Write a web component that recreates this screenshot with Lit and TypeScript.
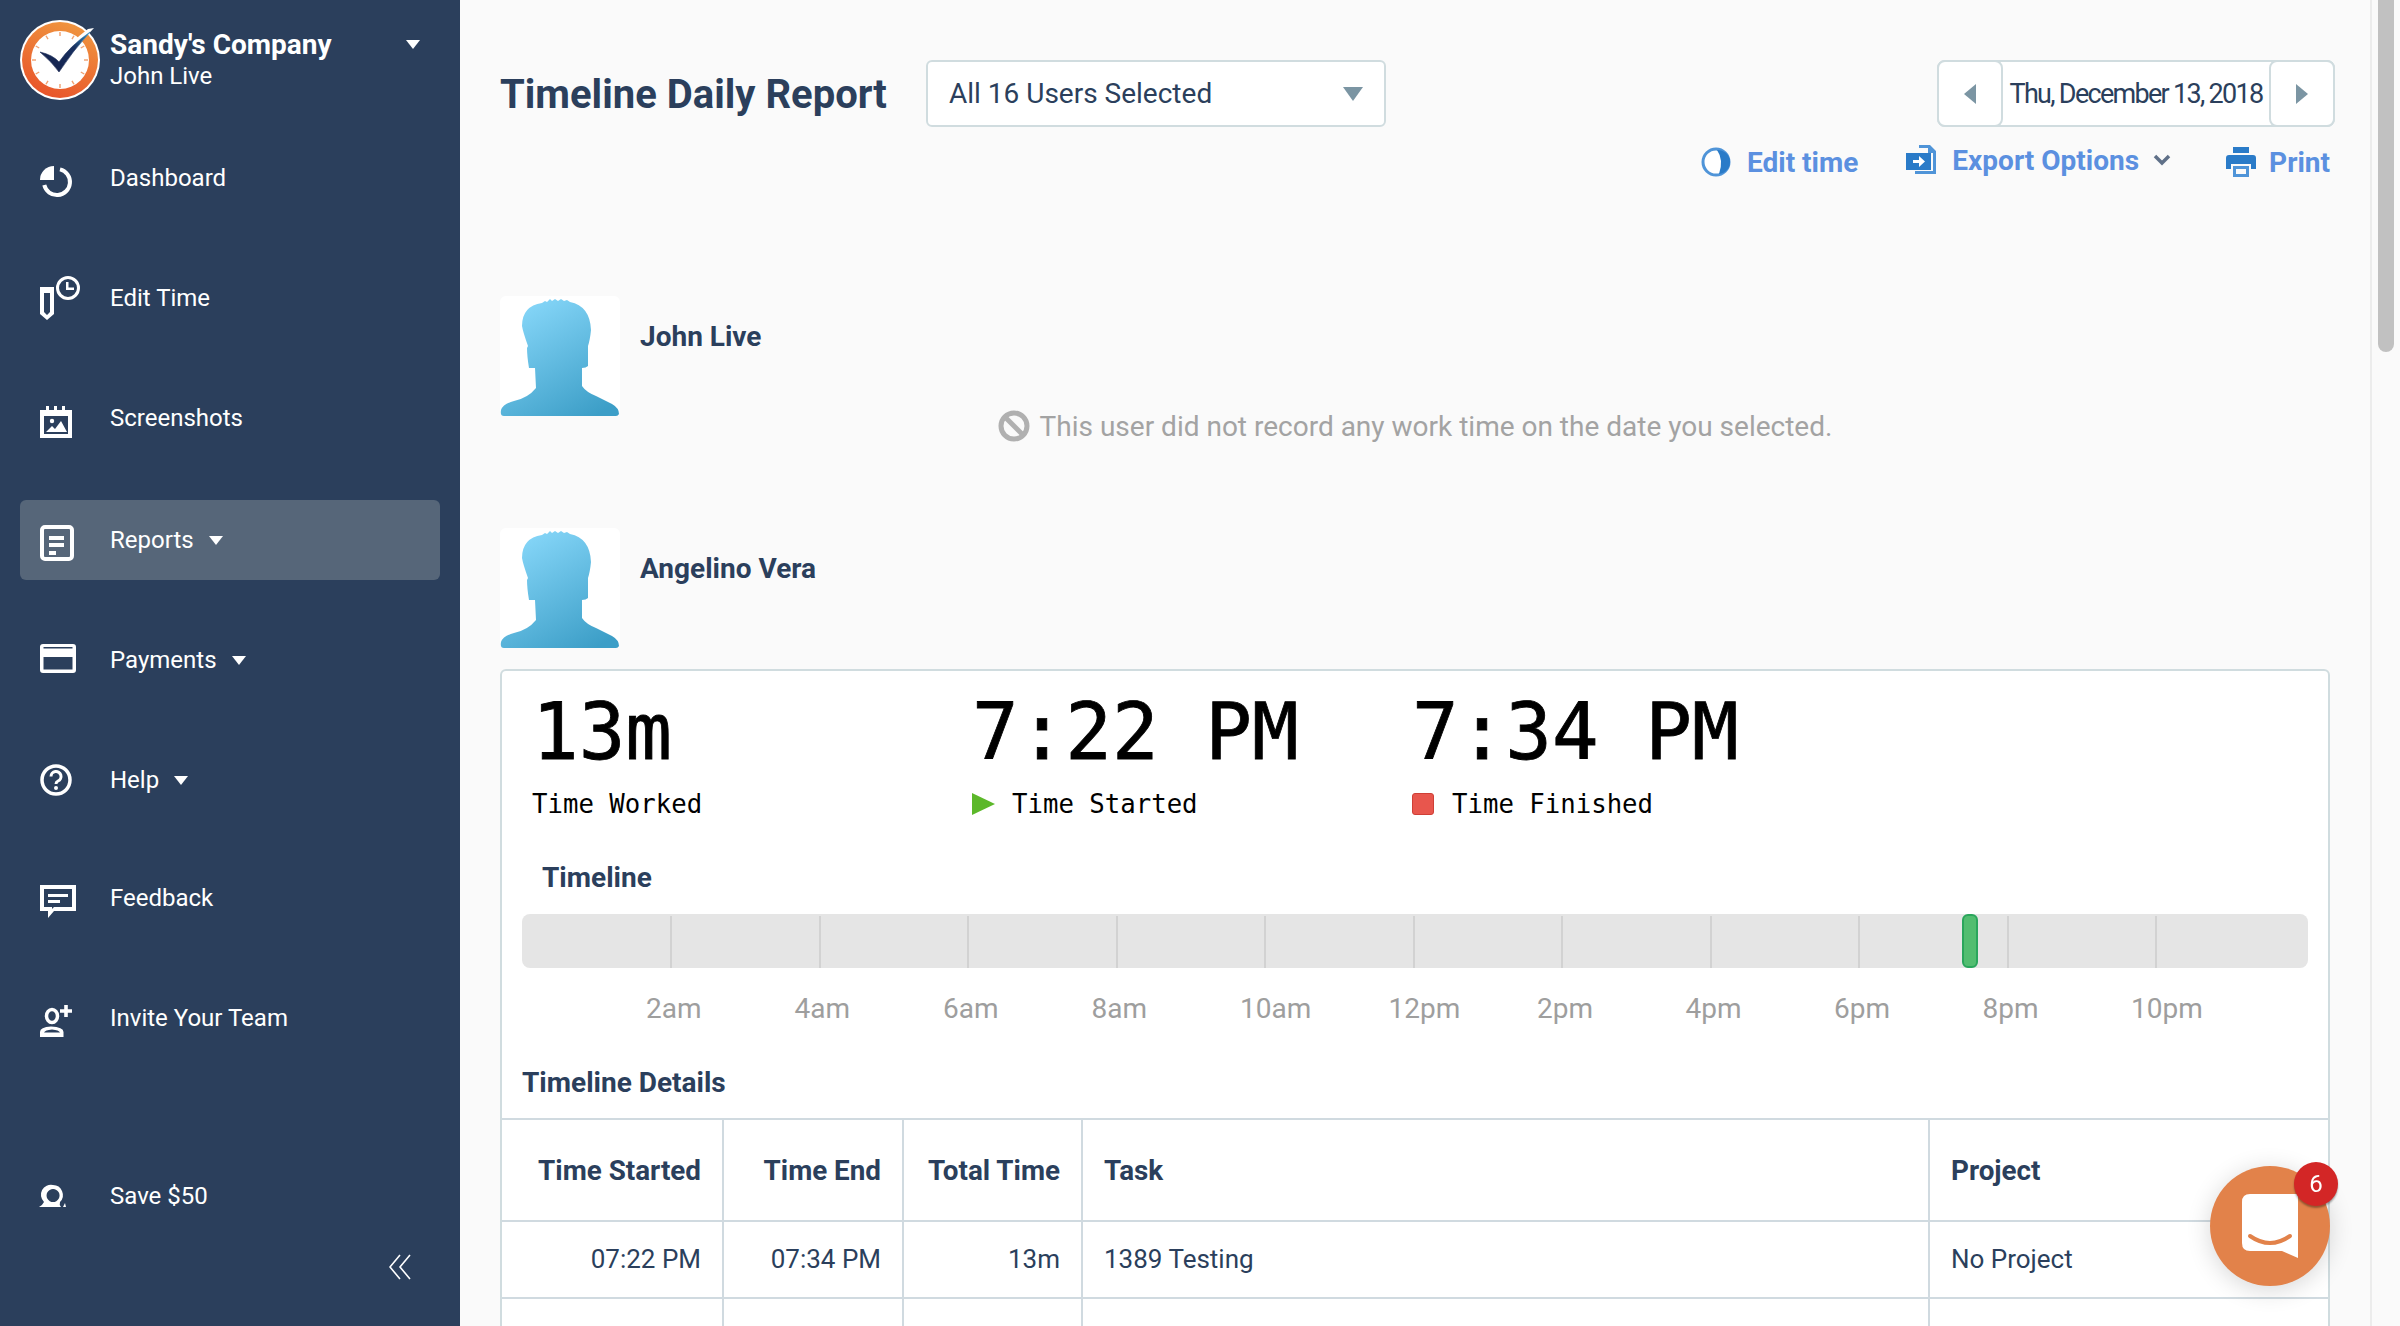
import { LitElement, html, svg, css } from 'lit';
import { customElement } from 'lit/decorators.js';

// sidebar icons, drawn in a 40x40 box centred on the row
const icons: Record<string, unknown> = {
  dashboard: svg`<path d="M14 8 A14 14 0 0 0 0 22 H14 Z" fill="#fff"/><path d="M20 11.400 A13 13 0 1 1 4.300 27" fill="none" stroke="#fff" stroke-width="4"/>`,
  edit: svg`<path d="M0 9 H14 V36 L7 42 L0 36 Z M4 15 V34 L7 37 L10 34 V15 Z" fill="#fff" fill-rule="evenodd"/><circle cx="28" cy="10" r="10.500" fill="none" stroke="#fff" stroke-width="3"/><path d="M26 4 V12 H34 V9.500 H28.500 V4 Z" fill="#fff"/>`,
  shots: svg`<g transform="translate(0 6)"><path d="M0 6 H6 V2 H9 V6 H14 V2 H17 V6 H22 V2 H25 V6 H32 V34 H0 Z M4 12 V30 H28 V12 Z" fill="#fff" fill-rule="evenodd"/><circle cx="12" cy="17" r="2.200" fill="#fff"/><path d="M6 28 L12 22 L15 25 L21 17 L27 28 Z" fill="#fff"/></g>`,
  reports: svg`<rect x="2" y="7" width="30" height="32" rx="3" fill="none" stroke="#fff" stroke-width="4"/><path d="M9 16 H24 V20 H9 Z M9 23 H24 V27 H9 Z M9 31 H16 V35 H9 Z" fill="#fff"/>`,
  payments: svg`<path d="M3 4 H33 Q36 4 36 7 V30 Q36 33 33 33 H3 Q0 33 0 30 V7 Q0 4 3 4 Z M3.500 7 V8.500 H32.500 V7 Z M3.500 17 V29.500 H32.500 V17 Z" fill="#fff" fill-rule="evenodd"/>`,
  help: svg`<g transform="translate(0 4)"><circle cx="16" cy="16" r="14" fill="none" stroke="#fff" stroke-width="3.500"/><path d="M11 12.500 A5 5 0 1 1 18 17 Q16 18 16 20" fill="none" stroke="#fff" stroke-width="3"/><circle cx="16" cy="24" r="2" fill="#fff"/></g>`,
  feedback: svg`<g transform="translate(0 6)"><path d="M0 1 H36 V27 H14 L8 34 V27 H0 Z M4 5 V23 H12 V25 L14 23 H32 V5 Z" fill="#fff" fill-rule="evenodd"/><path d="M8 10 H28 V13 H8 Z M8 16 H20 V19 H8 Z" fill="#fff"/></g>`,
  invite: svg`<ellipse cx="12" cy="18" rx="5.500" ry="6.500" fill="none" stroke="#fff" stroke-width="3.500"/><path d="M0 39 V34 Q0 29 11 28.500 Q23.500 29 23.500 34 V39 Z M4 34.500 H20 Q19 32 12 31.500 Q5 32 4 34.500 Z" fill="#fff" fill-rule="evenodd"/><path d="M24.200 7 H27.800 V11.200 H32 V14.800 H27.800 V19 H24.200 V14.800 H20 V11.200 H24.200 Z" fill="#fff"/>`,
  save: svg`<g transform="translate(-1 9)"><path d="M14 0 A10 10 0 0 1 21 17 Q20 20 22 22 H0 Q3 21 5 17 A10 10 0 0 1 14 0 Z M14 4 A6.500 6.500 0 1 0 14.100 4 Z" fill="#fff" fill-rule="evenodd"/><path d="M24 22 L26 18 L27 22 Z" fill="#fff"/></g>`,
};

const navItems = [
  { id: 'dashboard', label: 'Dashboard' },
  { id: 'edit', label: 'Edit Time' },
  { id: 'shots', label: 'Screenshots' },
  { id: 'reports', label: 'Reports', caret: true, active: true },
  { id: 'payments', label: 'Payments', caret: true },
  { id: 'help', label: 'Help', caret: true },
  { id: 'feedback', label: 'Feedback' },
  { id: 'invite', label: 'Invite Your Team' },
];

const hours = ['2am', '4am', '6am', '8am', '10am', '12pm', '2pm', '4pm', '6pm', '8pm', '10pm'];

const avatar = html`<div class="avatar">
  <svg width="120" height="120" viewBox="0 0 120 120">
    <defs>
      <linearGradient id="sil" x1="0.2" y1="0" x2="0.8" y2="1">
        <stop offset="0" stop-color="#88d8fa" />
        <stop offset="1" stop-color="#3c9ec7" />
      </linearGradient>
    </defs>
    <path
      fill="url(#sil)"
      d="M4 120 Q0 120 1 114 Q3 108 14 105 Q28 102 36 92 L35 72 L29 72 Q27 60 27 52 L28 50 Q23 36 22 30 Q22 10 42 7 L45 5 L47 6 L50 3 L52 5 L55 3 L58 5 L61 3 L64 5 L67 4 L70 6 Q90 10 91 34 Q90 44 88 50 L88 70 Q86 72 82 72 L82 90 Q86 96 96 100 L112 108 Q119 112 119 118 Q118 120 116 120 Z"
    />
  </svg>
</div>`;

@customElement('app-root')
export class AppRoot extends LitElement {
  static styles = css`
    :host {
      display: flex;
      height: 100vh;
      overflow: hidden;
      font-family: Roboto, 'Liberation Sans', sans-serif;
      color: #2b3f5c;
      background: #fafafa;
    }
    .side {
      width: 460px;
      flex: none;
      background: #2b3f5c;
      color: #fff;
      display: flex;
      flex-direction: column;
      box-sizing: border-box;
      padding: 20px 20px 0;
    }
    .brand {
      display: flex;
      align-items: flex-start;
      height: 80px;
      margin-bottom: 38px;
    }
    .brand .logo {
      flex: none;
    }
    .brand .names {
      margin-left: 10px;
      flex: 1;
      padding-top: 8px;
    }
    .brand .co {
      font-size: 28px;
      font-weight: 700;
      line-height: 34px;
    }
    .brand .me {
      font-size: 24px;
      line-height: 28px;
    }
    .brand .caret {
      margin: 20px 20px 0 0;
    }
    .caret {
      width: 0;
      height: 0;
      border-left: 7px solid transparent;
      border-right: 7px solid transparent;
      border-top: 9px solid #fff;
    }
    .nav {
      display: flex;
      flex-direction: column;
      gap: 40px;
    }
    .item {
      height: 80px;
      display: flex;
      align-items: center;
      padding-left: 20px;
      border-radius: 6px;
      font-size: 24px;
    }
    .item svg {
      width: 40px;
      height: 40px;
      flex: none;
      margin-right: 30px;
      overflow: visible;
    }
    .item .caret {
      margin-left: 15px;
    }
    .item.active {
      background: #566679;
    }
    .item.reports {
      margin-top: 2px;
    }
    .item.feedback {
      margin-top: -2px;
    }
    .item.save {
      margin-top: 58px;
    }
    .collapse {
      align-self: flex-end;
      margin: 18px 29px 0 0;
      display: block;
    }

    .main {
      flex: 1;
      min-width: 0;
      box-sizing: border-box;
      padding: 60px 40px 0;
    }
    .top {
      display: flex;
      align-items: center;
      height: 67px;
    }
    .top h1 {
      font-size: 40px;
      font-weight: 700;
      margin: 0;
      padding-top: 3px;
      width: 426px;
      flex: none;
      line-height: 64px;
    }
    .select {
      width: 460px;
      height: 67px;
      box-sizing: border-box;
      background: #fff;
      border: 2px solid #d0dcdf;
      border-radius: 6px;
      display: flex;
      align-items: center;
      justify-content: space-between;
      padding: 0 21px;
      font-size: 28px;
    }
    .tri-down {
      border-left: 10px solid transparent;
      border-right: 10px solid transparent;
      border-top: 14px solid #7b95a3;
    }
    .date {
      margin-left: auto;
      margin-right: -5px;
      width: 398px;
      height: 67px;
      box-sizing: border-box;
      background: #fff;
      border: 2px solid #d0dcdf;
      border-radius: 8px;
      display: flex;
      align-items: center;
      font-size: 27px;
      letter-spacing: -1.700px;
    }
    .date .text {
      flex: 1;
      text-align: center;
      white-space: nowrap;
    }
    .date button {
      width: 66px;
      height: 67px;
      margin: -2px;
      flex: none;
      background: #fff;
      border: 2px solid #d0dcdf;
      border-radius: 8px;
      padding: 0;
      display: flex;
      align-items: center;
      justify-content: center;
    }
    .tri-left {
      border-top: 10px solid transparent;
      border-bottom: 10px solid transparent;
      border-right: 12px solid #7b95a3;
    }
    .tri-right {
      border-top: 10px solid transparent;
      border-bottom: 10px solid transparent;
      border-left: 12px solid #7b95a3;
    }
    .actions {
      display: flex;
      justify-content: flex-end;
      align-items: center;
      height: 40px;
      margin-top: 15px;
      font-size: 28px;
      font-weight: 700;
      color: #5b90e0;
    }
    .act {
      display: flex;
      align-items: center;
      margin-left: 48px;
    }
    .act svg {
      margin-right: 16px;
      flex: none;
    }
    .act.print {
      margin-left: 55px;
    }
    .act.print svg {
      margin-right: 13px;
    }
    .act.export {
      padding-bottom: 4px;
    }
    .act .chev {
      margin: 0 0 0 14px;
    }

    .user {
      display: flex;
    }
    .user.first {
      margin-top: 114px;
    }
    .user.second {
      margin-top: 82px;
    }
    .avatar {
      width: 120px;
      height: 120px;
      background: #fff;
      border-radius: 6px;
      flex: none;
    }
    .avatar svg {
      display: block;
    }
    .user .name {
      margin: 21px 0 0 20px;
      font-size: 28px;
      font-weight: 700;
      line-height: 40px;
    }
    .empty {
      margin-top: -10px;
      height: 40px;
      display: flex;
      justify-content: center;
      align-items: center;
      gap: 10px;
      font-size: 28px;
      color: #a3a3a3;
    }

    .card {
      margin-top: 21px;
      background: #fff;
      border: 2px solid #d0dcdf;
      border-radius: 6px;
      padding-top: 16px;
    }
    .stats {
      display: flex;
      padding-left: 30px;
      color: #000;
      font-family: 'DejaVu Sans Mono', 'Liberation Mono', monospace;
    }
    .stat {
      width: 440px;
    }
    .stat .big {
      font-size: 77.500px;
      line-height: 90px;
      white-space: pre;
      -webkit-text-stroke: 0.8px #000;
    }
    .stat .lab {
      margin-top: 9px;
      font-size: 25.700px;
      line-height: 36px;
      display: flex;
      align-items: center;
      white-space: pre;
    }
    .play {
      width: 0;
      height: 0;
      margin-right: 17px;
      border-top: 11px solid transparent;
      border-bottom: 11px solid transparent;
      border-left: 23px solid #5cb82a;
    }
    .stop {
      width: 22px;
      height: 22px;
      margin-right: 18px;
      box-sizing: border-box;
      background: #e8564d;
      border: 1px solid #cf3f36;
      border-radius: 3px;
    }
    .sub {
      font-size: 28px;
      font-weight: 700;
      line-height: 40px;
    }
    .sub.tl {
      margin: 36px 0 16px 40px;
    }
    .bar {
      position: relative;
      margin: 0 20px;
      height: 54px;
      box-sizing: border-box;
      padding: 2px 0 0 1.500px;
      background: #e5e5e5;
      border-radius: 8px;
      display: flex;
    }
    .seg {
      flex: 0 0 148.500px;
      box-sizing: border-box;
      border-right: 2px solid #d2d2d2;
    }
    .seg.end {
      flex: 1;
      border-right: none;
    }
    .span {
      position: absolute;
      top: 0;
      bottom: 0;
      min-width: 16px;
      box-sizing: border-box;
      background: #52bd70;
      border: 2px solid #2aa65c;
      border-radius: 6px;
    }
    .axis {
      display: flex;
      margin: 21px 0 0 144px;
      font-size: 28px;
      line-height: 40px;
      color: #9e9e9e;
    }
    .axis span {
      width: 148.500px;
      flex: none;
    }
    .sub.td {
      margin: 34px 0 15px 20px;
    }
    table {
      width: 100%;
      table-layout: fixed;
      border-collapse: collapse;
      font-size: 26px;
    }
    th,
    td {
      border: 2px solid #d0dae0;
      padding: 0 21px;
      text-align: left;
    }
    tr > :first-child {
      border-left: none;
    }
    tr > :last-child {
      border-right: none;
    }
    th {
      height: 100px;
      font-size: 27.800px;
      font-weight: 700;
    }
    td {
      height: 77px;
      padding-bottom: 2px;
      box-sizing: border-box;
      font-weight: 400;
    }
    .num {
      text-align: right;
    }
    col.c1 {
      width: 221px;
    }
    col.c2 {
      width: 180px;
    }
    col.c3 {
      width: 179px;
    }
    col.c4 {
      width: 847px;
    }

    .rail {
      width: 30px;
      flex: none;
      box-sizing: border-box;
      border-left: 2px solid #ececec;
      padding-left: 6px;
      background: #fafafa;
    }
    .thumb {
      width: 16px;
      height: 352px;
      background: #c1c1c1;
      border-radius: 0 0 8px 8px;
    }

    .chat {
      position: fixed;
      right: 70px;
      bottom: 40px;
      width: 120px;
      height: 120px;
      border-radius: 50%;
      background: #e2824a;
      box-shadow: 0 4px 24px rgba(0, 0, 0, 0.16);
      display: flex;
      align-items: center;
      justify-content: center;
    }
    .badge {
      position: absolute;
      top: -4px;
      right: -8px;
      width: 44px;
      height: 44px;
      border-radius: 50%;
      background: #d32626;
      box-shadow: 0 2px 2px rgba(0, 0, 0, 0.35);
      color: #fff;
      font-size: 24px;
      line-height: 44px;
      text-align: center;
    }
  `;

  render() {
    const started = 19 * 60 + 22;
    const ended = 19 * 60 + 34;
    const spanLeft = (started / 1440) * 100;
    const spanWidth = ((ended - started) / 1440) * 100;

    return html`
      <aside class="side">
        <div class="brand">
          ${this.renderLogo()}
          <div class="names">
            <div class="co">Sandy's Company</div>
            <div class="me">John Live</div>
          </div>
          <div class="caret"></div>
        </div>
        <nav class="nav">
          ${navItems.map(
            (n) => html`<div class="item ${n.id} ${n.active ? 'active' : ''}">
              <svg viewBox="0 0 40 40">${icons[n.id]}</svg>
              <span>${n.label}</span>
              ${n.caret ? html`<span class="caret"></span>` : ''}
            </div>`,
          )}
          <div class="item save">
            <svg viewBox="0 0 40 40">${icons.save}</svg>
            <span>Save $50</span>
          </div>
        </nav>
        <svg class="collapse" width="22" height="26" viewBox="0 0 22 26" fill="none" stroke="#fff" stroke-width="1.600">
          <path d="M11 1 L1 13 L11 25 M21 1 L11 13 L21 25" />
        </svg>
      </aside>

      <main class="main">
        <div class="top">
          <h1>Timeline Daily Report</h1>
          <div class="select">
            <span>All 16 Users Selected</span>
            <span class="tri-down"></span>
          </div>
          <div class="date">
            <button><span class="tri-left"></span></button>
            <span class="text">Thu, December 13, 2018</span>
            <button><span class="tri-right"></span></button>
          </div>
        </div>
        <div class="actions">
          <div class="act">
            <svg width="30" height="30" viewBox="0 0 30 30">
              <circle cx="15" cy="15" r="13" fill="#fff" stroke="#4f94d8" stroke-width="3" />
              <path d="M16 3 A12 12 0 0 1 18 27 Q23 13 16 3 Z" fill="#2a7bc8" />
            </svg>
            Edit time
          </div>
          <div class="act export">
            <svg width="30" height="30" viewBox="0 0 30 30">
              <path d="M13 0 H24 L30 6 V29 H9 V26 H27 V8 H22 V3 H13 Z" fill="#4f94d8" />
              <path d="M0 8 H25 V25 H0 Z" fill="#2a7bc8" />
              <path d="M7 15 H13 V11 L19 16.500 L13 22 V18 H7 Z" fill="#fff" />
            </svg>
            Export Options
            <svg class="chev" width="18" height="12" viewBox="0 0 18 12" fill="none" stroke="#5f7088" stroke-width="3.500">
              <path d="M2 2 L9 9 L16 2" />
            </svg>
          </div>
          <div class="act print">
            <svg width="30" height="30" viewBox="0 0 30 30">
              <path d="M7 0 H23 V6 H7 Z" fill="#2a7bc8" />
              <path d="M3 8 H27 Q30 8 30 11 V22 H25 V17 H5 V22 H0 V11 Q0 8 3 8 Z" fill="#2a7bc8" />
              <path d="M7 19 H23 V30 H7 Z M10 22 V27 H20 V22 Z" fill="#4f94d8" fill-rule="evenodd" />
            </svg>
            Print
          </div>
        </div>

        <div class="user first">
          ${avatar}
          <div class="name">John Live</div>
        </div>
        <div class="empty">
          <svg width="32" height="32" viewBox="0 0 32 32" fill="none" stroke="#b0b0b0" stroke-width="5">
            <circle cx="16" cy="16" r="13" />
            <path d="M7 7 L25 25" />
          </svg>
          This user did not record any work time on the date you selected.
        </div>

        <div class="user second">
          ${avatar}
          <div class="name">Angelino Vera</div>
        </div>

        <section class="card">
          <div class="stats">
            <div class="stat">
              <div class="big">13m</div>
              <div class="lab">Time Worked</div>
            </div>
            <div class="stat">
              <div class="big">7:22 PM</div>
              <div class="lab"><span class="play"></span>Time Started</div>
            </div>
            <div class="stat">
              <div class="big">7:34 PM</div>
              <div class="lab"><span class="stop"></span>Time Finished</div>
            </div>
          </div>
          <div class="sub tl">Timeline</div>
          <div class="bar">
            ${Array.from({ length: 12 }, (_, i) => html`<div class="seg ${i === 11 ? 'end' : ''}"></div>`)}
            <div class="span" style="left:calc(${spanLeft}% - 1px);width:${spanWidth}%"></div>
          </div>
          <div class="axis">${hours.map((h) => html`<span>${h}</span>`)}</div>
          <div class="sub td">Timeline Details</div>
          <table>
            <colgroup>
              <col class="c1" /><col class="c2" /><col class="c3" /><col class="c4" /><col />
            </colgroup>
            <thead>
              <tr>
                <th class="num">Time Started</th>
                <th class="num">Time End</th>
                <th class="num">Total Time</th>
                <th>Task</th>
                <th>Project</th>
              </tr>
            </thead>
            <tbody>
              <tr>
                <td class="num">07:22 PM</td>
                <td class="num">07:34 PM</td>
                <td class="num">13m</td>
                <td>1389 Testing</td>
                <td>No Project</td>
              </tr>
              <tr>
                <td></td>
                <td></td>
                <td></td>
                <td></td>
                <td></td>
              </tr>
            </tbody>
          </table>
        </section>
      </main>

      <div class="rail"><div class="thumb"></div></div>

      <div class="chat">
        <svg width="56" height="64" viewBox="0 0 56 64">
          <path d="M8 0 H56 V64 L40 57 H8 Q0 57 0 49 V8 Q0 0 8 0 Z" fill="#fff" />
          <path d="M8 42 Q28 56 48 42" fill="none" stroke="#e2824a" stroke-width="4" stroke-linecap="round" />
        </svg>
        <div class="badge">6</div>
      </div>
    `;
  }

  private renderLogo() {
    const ticks = Array.from({ length: 12 }, (_, i) => i * 30);
    return html`<svg class="logo" width="80" height="80" viewBox="0 0 80 80">
      <defs>
        <linearGradient id="ring" x1="0.7" y1="0" x2="0.3" y2="1">
          <stop offset="0" stop-color="#f0963f" />
          <stop offset="1" stop-color="#e8532a" />
        </linearGradient>
        <linearGradient id="tick" x1="0" y1="1" x2="1" y2="0">
          <stop offset="0" stop-color="#141f4a" />
          <stop offset="0.65" stop-color="#18305f" />
          <stop offset="1" stop-color="#2f8fc4" />
        </linearGradient>
      </defs>
      <circle cx="40" cy="40" r="40" fill="#fff" />
      <circle cx="40" cy="40" r="38" fill="url(#ring)" />
      <circle cx="40" cy="40" r="29" fill="#fff" />
      ${ticks.map(
        (a) => svg`<rect x="39.300" y="12" width="1.400" height="4" fill="#f0a070" transform="rotate(${a} 40 40)" />`,
      )}
      <path d="M74 8 L68 9 Q50 22 39 39 L45 46 Q56 26 74 8 Z" fill="#fff" />
      <path d="M20 32 Q33 35 39 42 Q50 26 70 12 Q52 32 39 52 Q32 42 20 32 Z" fill="url(#tick)" stroke="url(#tick)" stroke-width="0.600" />
    </svg>`;
  }
}
